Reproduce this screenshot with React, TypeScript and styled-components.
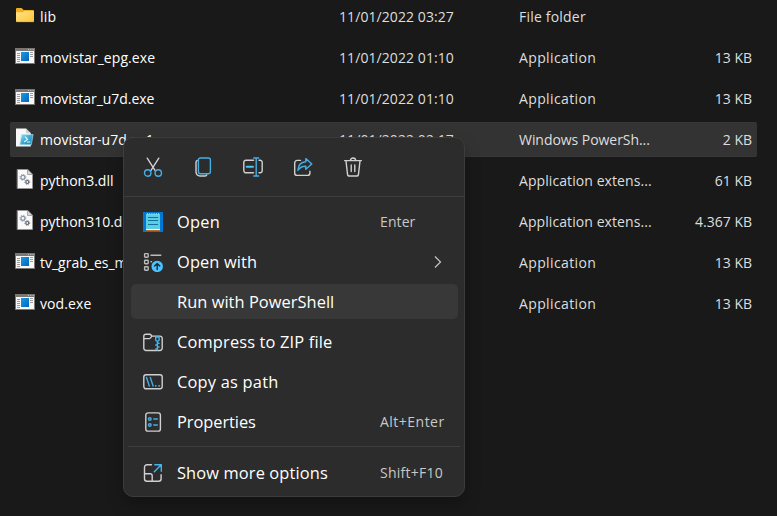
import React from 'react';
import styled, { createGlobalStyle } from 'styled-components';

const GlobalStyle = createGlobalStyle`
  *, *::before, *::after { box-sizing: border-box; }
  body {
    margin: 0;
    background: #191919;
    overflow: hidden;
    font-family: "Open Sans", "Noto Sans", sans-serif;
  }
`;

const Window = styled.main`
  position: relative;
  width: 777px;
  height: 516px;
  overflow: hidden;
  background: #191919;
`;

const FileList = styled.div`
  display: flex;
  flex-direction: column;
  gap: 6px;
  margin-top: -1px;
  padding-left: 10px;
`;

const FileRow = styled.div<{ $selected?: boolean }>`
  display: grid;
  grid-template-columns: 329px 180px 149px 1fr;
  align-items: center;
  flex: none;
  width: 747px;
  height: 35px;
  padding-right: 5px;
  border-radius: 2px;
  border: 1px solid ${p => (p.$selected ? '#373737' : 'transparent')};
  border-width: 1px 0;
  background: ${p => (p.$selected ? '#333333' : 'transparent')};
  font-size: 14px;
  line-height: 20px;
  color: #dedede;
  white-space: nowrap;
`;

const NameCell = styled.div`
  display: flex;
  align-items: center;
  gap: 5px;
  padding-left: 5px;
  color: #ffffff;

  svg { flex: none; margin-top: -4px; }
`;

const Cell = styled.div<{ $end?: boolean }>`
  text-align: ${p => (p.$end ? 'right' : 'left')};
`;

const Label = styled.span<{ $track?: number }>`
  letter-spacing: ${p => p.$track ?? 0}px;
`;

const Menu = styled.div`
  position: absolute;
  left: 123px;
  top: 137px;
  width: 342px;
  height: 360px;
  display: flex;
  flex-direction: column;
  border: 1px solid #3c3c3c;
  border-radius: 10px;
  background: #2c2c2c;
  box-shadow: 0 8px 16px rgba(0, 0, 0, 0.26);
`;

const ActionBar = styled.div`
  display: flex;
  gap: 30px;
  height: 59px;
  padding: 19px 0 0 19px;
  border-bottom: 1px solid #3d3d3d;
`;

const MenuGroup = styled.div`
  display: flex;
  flex-direction: column;
  gap: 5px;
  padding: 7px 6px 0 7px;
`;

const MenuItem = styled.div<{ $active?: boolean }>`
  display: grid;
  grid-template-columns: 46px 203px 1fr;
  align-items: center;
  height: 35px;
  border-radius: 5px;
  background: ${p => (p.$active ? '#383838' : 'transparent')};
  font-size: 16.4px;
  line-height: 24px;
  color: #ffffff;
  white-space: nowrap;
`;

const IconSlot = styled.span`
  display: flex;
  padding-left: 12px;
`;

const Shortcut = styled.span<{ $track?: number }>`
  font-size: 14px;
  letter-spacing: ${p => p.$track ?? 0}px;
  color: #c8c8c8;
`;

const Arrow = styled.span`
  display: flex;
  padding-left: 54px;
`;

const Separator = styled.div`
  flex: none;
  height: 1px;
  margin: 7px 4px 1px;
  background: #3e3e3e;
`;

const BLUE = '#4cc2ff';
const GREY = '#d0d0d0';

const Icon = ({ children }: { children: React.ReactNode }) => (
  <svg width="20" height="20" viewBox="0 0 20 20" fill="none" strokeWidth="1.4" strokeLinecap="round" strokeLinejoin="round">
    {children}
  </svg>
);

const FolderIcon = () => (
  <Icon>
    <defs>
      <linearGradient id="folder" x1="0" y1="0" x2="1" y2="1">
        <stop stopColor="#ffe28a" />
        <stop offset="1" stopColor="#fcc737" />
      </linearGradient>
    </defs>
    <path d="M1 4a1 1 0 0 1 1-1h4.6l2 2H18a1 1 0 0 1 1 1v10H1z" fill="#f2ae1c" />
    <path d="M1 7.2h6.8L9.6 6H18a1 1 0 0 1 1 1v9a1 1 0 0 1-1 1H2a1 1 0 0 1-1-1z" fill="url(#folder)" />
    <path d="M1.6 16.7h16.8" stroke="#eeb02b" strokeWidth=".7" />
  </Icon>
);

const AppIcon = () => (
  <Icon>
    <defs>
      <linearGradient id="app" x1="0" y1="0" x2="1" y2="1">
        <stop stopColor="#1a9be4" />
        <stop offset="1" stopColor="#0564bd" />
      </linearGradient>
    </defs>
    <path d="M0 2h20v16H0z" fill="#797673" />
    <path d="M1 5h18v12H1z" fill="#f7f7f7" />
    <path d="M13 3.5h1M15.3 3.5h1M17.6 3.5h1" stroke="#c5c3c1" strokeWidth="1" strokeLinecap="butt" />
    <path d="M2 7.5h3M2 9.5h3M2 11.5h3M2 13.5h3M2 15.5h3M15 6.5h3M15 8.5h3M15 10.5h3" stroke="#9a9a9a" strokeWidth="1" strokeLinecap="butt" />
    <path d="M6 6h8v9H6z" fill="url(#app)" />
  </Icon>
);

const DllIcon = () => (
  <Icon>
    <path d="M2.5.5h10.2l4.8 4.8v14.2h-15z" fill="#fafafa" stroke="#9b9b9b" strokeWidth=".7" />
    <path d="M12.5.6v4.9h4.8z" fill="#d4d4d4" stroke="#8f8f8f" strokeWidth=".7" />
    <circle cx="7.9" cy="8.3" r="2" stroke="#8994a1" strokeWidth="1.2" />
    <circle cx="7.9" cy="8.3" r="3" stroke="#8994a1" strokeWidth=".9" strokeDasharray="1.2 1.16" strokeLinecap="butt" />
    <circle cx="12.3" cy="13" r="1.5" stroke="#59616b" strokeWidth="1.2" />
    <circle cx="12.3" cy="13" r="2.4" stroke="#59616b" strokeWidth=".8" strokeDasharray="1 .88" strokeLinecap="butt" />
  </Icon>
);

const ScriptIcon = () => (
  <Icon>
    <defs>
      <linearGradient id="script" x1="0" y1="0" x2="1" y2="1">
        <stop stopColor="#9adaf0" />
        <stop offset=".5" stopColor="#3ba9d2" />
        <stop offset="1" stopColor="#1287b8" />
      </linearGradient>
    </defs>
    <path d="M1 .5h10l4.8 4.8v13.2H1z" fill="#f8f8f8" />
    <path d="M11 .5v4.8h4.8z" fill="#cfcfcf" />
    <path d="M6.8 6.5h11.3L16.4 16.700H5z" fill="url(#script)" stroke="#b9e2ef" strokeWidth=".6" />
    <path d="m10.300 9 2.400 2.300-3.200 2.400M12.500 14h2.300" stroke="#e3f7ff" strokeWidth="1.1" />
  </Icon>
);

const CutIcon = () => (
  <Icon>
    <path d="M4.2 1.2 12 13.4M15.8 1.2 8 13.4" stroke={GREY} />
    <circle cx="4.700" cy="16" r="3.2" stroke="#45aee5" />
    <circle cx="15.300" cy="16" r="3.2" stroke="#45aee5" />
  </Icon>
);

const CopyIcon = () => (
  <Icon>
    <path d="M4.3 3.4c-.8.4-1.3 1-1.3 2v9.4C3 17.3 4.6 19 7 19h4.6c1 0 1.8-.5 2.2-1.2" stroke={GREY} />
    <rect x="5.4" y="1" width="12" height="15.8" rx="2" stroke="#45aee5" />
  </Icon>
);

const RenameIcon = () => (
  <Icon>
    <path d="M10.5 3.2H3a2.2 2.2 0 0 0-2.2 2.2v8.2A2.2 2.2 0 0 0 3 15.8h7.5M16 3.2h1a2.2 2.2 0 0 1 2.2 2.2v8.2a2.2 2.2 0 0 1-2.2 2.2h-1" stroke={GREY} />
    <path d="M10.7 1h5M10.7 19h5M13.2 1v18" stroke="#45aee5" />
    <path d="M3.7 9.7h6.300" stroke={BLUE} strokeWidth="2" />
  </Icon>
);

const ShareIcon = () => (
  <Icon>
    <path d="M7.5 3.4H4.2a2.5 2.5 0 0 0-2.5 2.5v10a2.5 2.5 0 0 0 2.5 2.5h10.2a2.5 2.5 0 0 0 2.5-2.5v-1.7" stroke={GREY} />
    <path d="m12.8 1.6 6 5.4-6 5.3V9.2c-3.7-.2-6 1.2-7.9 4.1C5.2 8.3 7.6 5 12.8 4.7z" stroke="#45aee5" />
  </Icon>
);

const TrashIcon = () => (
  <Icon>
    <path d="M1.6 3.6h16.8M7.4 3.4a2.6 2.4 0 0 1 5.2 0M3 3.8l1.5 13.3A2 2 0 0 0 6.500 19h7a2 2 0 0 0 2-1.9L17 3.8M8.2 8v6.500M11.8 8v6.500" stroke={GREY} />
  </Icon>
);

const NotepadIcon = () => (
  <Icon>
    <path d="M0 0h20v20H0z" fill="#0078d4" />
    <path d="M3 2h14v15H3z" fill="#5ccbe5" />
    <path d="M3 17h14v1H3z" fill="#f2f2f2" />
    <path d="M3 18h14v1H3z" fill="#b66a2d" />
    <path d="M4.5 1v1.8M6.7 1v1.8M8.9 1v1.8M11.1 1v1.8M13.3 1v1.8M15.5 1v1.8" stroke="#a2e6f4" strokeWidth=".9" strokeLinecap="butt" />
    <path d="M5 5.500h10M5 8.500h10M5 12.500h10" stroke="#10759a" strokeWidth="1.1" strokeLinecap="butt" />
  </Icon>
);

const OpenWithIcon = () => (
  <Icon>
    <rect x="1.6" y="1.6" width="3.6" height="3.6" rx=".7" stroke="#bcbcbc" />
    <rect x="1.6" y="8.2" width="3.6" height="3.6" rx=".7" stroke="#bcbcbc" />
    <rect x="1.6" y="14.7" width="3.6" height="3.6" rx=".7" stroke="#bcbcbc" />
    <path d="M8 3.3h9.8M8 9.8h.5" stroke="#bcbcbc" />
    <circle cx="14.2" cy="14.4" r="5.7" fill={BLUE} />
    <path d="M14.2 17.5v-6M11.6 14l2.6-2.6 2.6 2.6" stroke="#152a38" />
  </Icon>
);

const ZipIcon = () => (
  <Icon>
    <path d="M.8 5.6V4.2A2 2 0 0 1 2.8 2.2h3.7c.8 0 1.3.4 1.8 1l.7.9h8a2.2 2.2 0 0 1 2.2 2.2v10a2.2 2.2 0 0 1-2.2 2.2H3A2.2 2.2 0 0 1 .8 16.3zM.8 6.6h5.6c1 0 1.7-1.6 2.6-2.5" stroke={GREY} />
    <path d="M12.7 5h3.4v3.2l-1.7 1.300-1.700-1.300zM14.400 9.500V18M14.400 11.200h1.700M14.400 13h-1.700M14.400 15h1.700M14.400 17h-1.700" stroke="#45b5ed" />
  </Icon>
);

const PathIcon = () => (
  <Icon>
    <rect x=".8" y="2.8" width="18.4" height="14" rx="2.2" stroke={GREY} />
    <path d="m3.5 5.500 2.800 8.500M7.300 5.500 10.100 14" stroke="#45aee5" />
    <path d="M12.600 13.800h.3M16 13.800h.3" stroke="#45aee5" strokeWidth="1.7" />
  </Icon>
);

const PropertiesIcon = () => (
  <Icon>
    <rect x="2.8" y=".9" width="14.6" height="18.2" rx="2.2" stroke={GREY} />
    <circle cx="6.800" cy="7" r="1.300" stroke="#45aee5" />
    <circle cx="6.800" cy="13" r="1.300" stroke="#45aee5" />
    <path d="M10.800 7h3.500M10.800 13h3.500" stroke="#45aee5" />
  </Icon>
);

const MoreIcon = () => (
  <Icon>
    <path d="M8.500 1.800H4A2.500 2.500 0 0 0 1.500 4.300v11.400A2.500 2.500 0 0 0 4 18.200h11.600a2.500 2.500 0 0 0 2.500-2.500v-4M1.500 10.800h5.700a2 2 0 0 1 2 2v5.400" stroke={GREY} />
    <path d="M11.800 1.700h6.500v6.500M18 2l-6.700 6.700" stroke="#45b5ed" />
  </Icon>
);

const ChevronIcon = () => (
  <svg width="8" height="14" viewBox="0 0 8 14" fill="none" stroke="#c4c4c4" strokeWidth="1.2">
    <path d="m1 1.500 5.500 5.500L1 12.500" />
  </svg>
);

type FileEntry = {
  icon: React.ComponentType;
  name: string;
  nameTrack?: number;
  date?: string;
  type: string;
  typeTrack?: number;
  size?: string;
  selected?: boolean;
};

const files: FileEntry[] = [
  { icon: FolderIcon, name: 'lib', nameTrack: 0.2, date: '11/01/2022 03:27', type: 'File folder', typeTrack: 0.2 },
  { icon: AppIcon, name: 'movistar_epg.exe', nameTrack: 0.07, date: '11/01/2022 01:10', type: 'Application', typeTrack: 0.38, size: '13 KB' },
  { icon: AppIcon, name: 'movistar_u7d.exe', nameTrack: -0.05, date: '11/01/2022 01:10', type: 'Application', typeTrack: 0.38, size: '13 KB' },
  { icon: ScriptIcon, name: 'movistar-u7d.ps1', date: '11/01/2022 02:17', type: 'Windows PowerSh...', typeTrack: -0.05, size: '2 KB', selected: true },
  { icon: DllIcon, name: 'python3.dll', type: 'Application extens...', typeTrack: 0.08, size: '61 KB' },
  { icon: DllIcon, name: 'python310.dll', type: 'Application extens...', typeTrack: 0.08, size: '4.367 KB' },
  { icon: AppIcon, name: 'tv_grab_es_m', type: 'Application', typeTrack: 0.38, size: '13 KB' },
  { icon: AppIcon, name: 'vod.exe', nameTrack: 0.1, type: 'Application', typeTrack: 0.38, size: '13 KB' },
];

type Command = {
  icon?: React.ComponentType;
  label: string;
  track?: number;
  shortcut?: string;
  shortcutTrack?: number;
  submenu?: boolean;
  active?: boolean;
};

const commands: Command[] = [
  { icon: NotepadIcon, label: 'Open', track: 0.25, shortcut: 'Enter', shortcutTrack: 0.1 },
  { icon: OpenWithIcon, label: 'Open with', track: 0.13, submenu: true },
  { label: 'Run with PowerShell', track: 0.05, active: true },
  { icon: ZipIcon, label: 'Compress to ZIP file', track: 0.16 },
  { icon: PathIcon, label: 'Copy as path', track: 0.22 },
  { icon: PropertiesIcon, label: 'Properties', track: -0.05, shortcut: 'Alt+Enter', shortcutTrack: 0.48 },
];

const moreCommand: Command = {
  icon: MoreIcon,
  label: 'Show more options',
  track: 0.13,
  shortcut: 'Shift+F10',
  shortcutTrack: 0.25,
};

const CommandRow = ({ icon: Glyph, label, track, shortcut, shortcutTrack, submenu, active }: Command) => (
  <MenuItem $active={active}>
    <IconSlot>{Glyph && <Glyph />}</IconSlot>
    <Label $track={track}>{label}</Label>
    {shortcut && <Shortcut $track={shortcutTrack}>{shortcut}</Shortcut>}
    {submenu && <Arrow><ChevronIcon /></Arrow>}
  </MenuItem>
);

export default function App() {
  return (
    <Window>
      <GlobalStyle />
      <FileList>
        {files.map(({ icon: Glyph, ...file }) => (
          <FileRow key={file.name} $selected={file.selected}>
            <NameCell><Glyph /><Label $track={file.nameTrack}>{file.name}</Label></NameCell>
            <Cell><Label $track={0.08}>{file.date}</Label></Cell>
            <Cell><Label $track={file.typeTrack}>{file.type}</Label></Cell>
            <Cell $end><Label>{file.size}</Label></Cell>
          </FileRow>
        ))}
      </FileList>
      <Menu>
        <ActionBar>
          <CutIcon />
          <CopyIcon />
          <RenameIcon />
          <ShareIcon />
          <TrashIcon />
        </ActionBar>
        <MenuGroup>
          {commands.map(command => <CommandRow key={command.label} {...command} />)}
        </MenuGroup>
        <Separator />
        <MenuGroup>
          <CommandRow {...moreCommand} />
        </MenuGroup>
      </Menu>
    </Window>
  );
}
